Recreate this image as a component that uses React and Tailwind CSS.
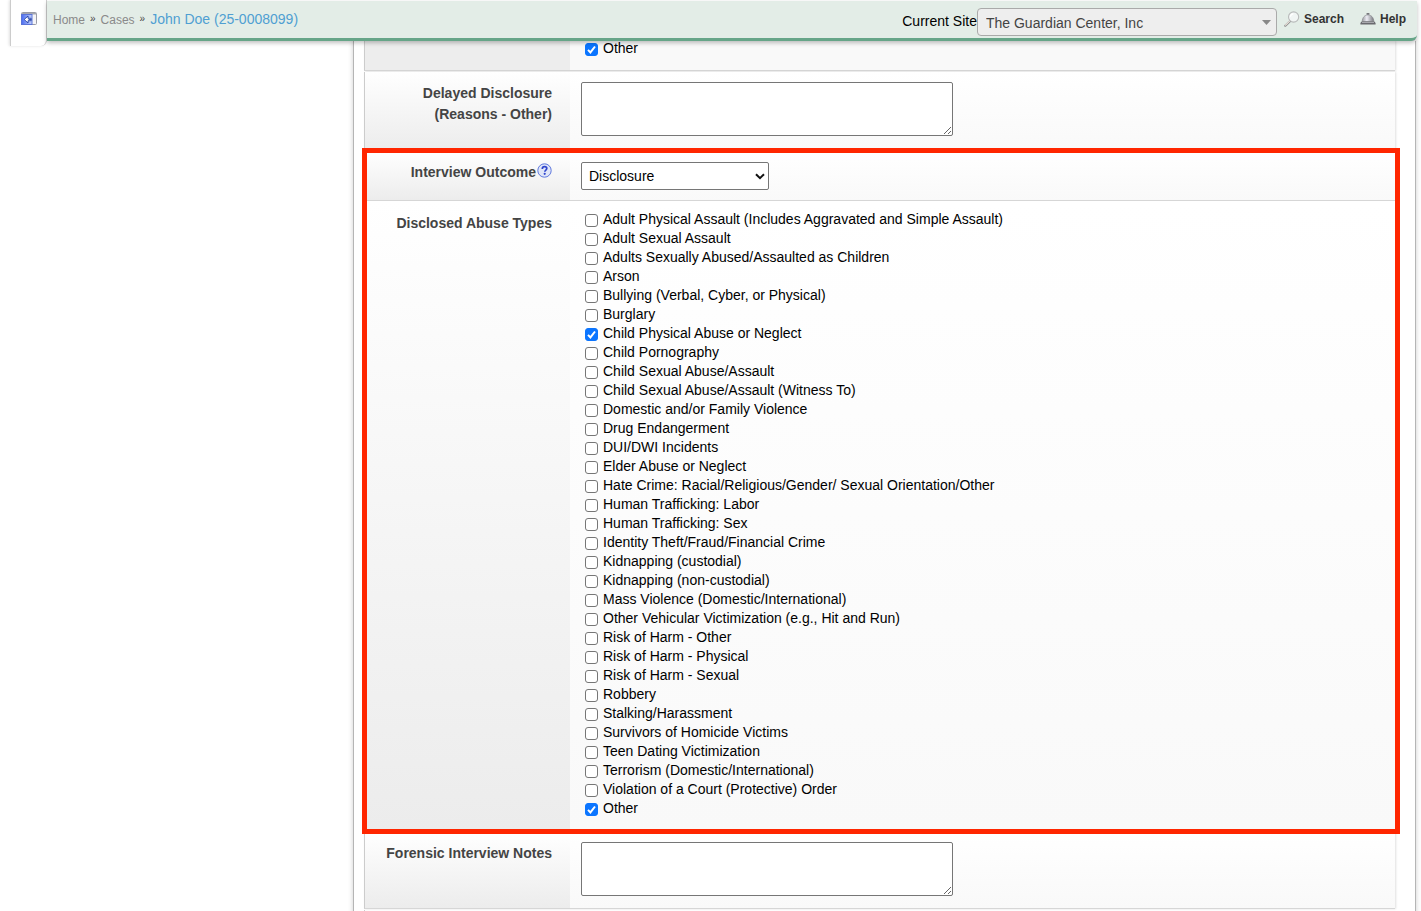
import React, { useState } from 'react';

const ABUSE_TYPES = [
  'Adult Physical Assault (Includes Aggravated and Simple Assault)',
  'Adult Sexual Assault',
  'Adults Sexually Abused/Assaulted as Children',
  'Arson',
  'Bullying (Verbal, Cyber, or Physical)',
  'Burglary',
  'Child Physical Abuse or Neglect',
  'Child Pornography',
  'Child Sexual Abuse/Assault',
  'Child Sexual Abuse/Assault (Witness To)',
  'Domestic and/or Family Violence',
  'Drug Endangerment',
  'DUI/DWI Incidents',
  'Elder Abuse or Neglect',
  'Hate Crime: Racial/Religious/Gender/ Sexual Orientation/Other',
  'Human Trafficking: Labor',
  'Human Trafficking: Sex',
  'Identity Theft/Fraud/Financial Crime',
  'Kidnapping (custodial)',
  'Kidnapping (non-custodial)',
  'Mass Violence (Domestic/International)',
  'Other Vehicular Victimization (e.g., Hit and Run)',
  'Risk of Harm - Other',
  'Risk of Harm - Physical',
  'Risk of Harm - Sexual',
  'Robbery',
  'Stalking/Harassment',
  'Survivors of Homicide Victims',
  'Teen Dating Victimization',
  'Terrorism (Domestic/International)',
  'Violation of a Court (Protective) Order',
  'Other',
];

function PanelIcon() {
  return (
    <svg width="16" height="14" viewBox="0 0 16 14">
      <defs>
        <linearGradient id="panelBlue" x1="0" x2="1">
          <stop offset="0" stopColor="#4a6cf0" />
          <stop offset="1" stopColor="#c3d0fa" />
        </linearGradient>
      </defs>
      <rect x="0.5" y="0.5" width="15" height="12" rx="1" fill="#f4f4f6" stroke="#9a9ca6" />
      <rect x="1" y="1" width="14" height="1.5" fill="#a5a7b0" />
      <rect x="0.5" y="2.5" width="10.5" height="10" fill="url(#panelBlue)" stroke="#5b74d8" />
      <path d="M3.2 7.5 7 4v2.3h3.2v2.4H7V11z" fill="#fff" stroke="#2443a8" strokeWidth="0.9" />
      <path d="M7.6 7.5h2.6" stroke="#2443a8" strokeWidth="0.9" />
    </svg>
  );
}

function SearchIcon() {
  return (
    <svg width="16" height="16" viewBox="0 0 16 16">
      <path d="M1.3 14.7 6 10.2" stroke="#8d8d8d" strokeWidth="2.2" strokeLinecap="round" />
      <path d="M1.5 14.1 5.6 10.1" stroke="#f0e8e0" strokeWidth="1.1" strokeLinecap="round" />
      <circle cx="9.6" cy="6" r="5.1" fill="#f1f5f4" stroke="#b9bbbb" strokeWidth="1.1" />
      <path d="M6.4 5.8a3.4 3.4 0 0 1 3-3" fill="none" stroke="#fff" strokeWidth="1.2" />
    </svg>
  );
}

function BellIcon() {
  return (
    <svg width="16" height="14" viewBox="0 0 16 14">
      <defs>
        <linearGradient id="bellMetal" x1="0" x2="1">
          <stop offset="0" stopColor="#9a9a9e" />
          <stop offset="0.4" stopColor="#ececf4" />
          <stop offset="1" stopColor="#77777d" />
        </linearGradient>
      </defs>
      <rect x="6.4" y="1" width="3.2" height="1.8" rx="0.8" fill="#77777c" />
      <path d="M2.2 9.6C2.2 5.6 4.7 2.9 8 2.9s5.8 2.7 5.8 6.7z" fill="url(#bellMetal)" stroke="#808086" strokeWidth="0.6" />
      <path d="M1.6 9.6h12.8l1.2 1.5v1.3H.4v-1.3z" fill="#6a6a6f" />
      <path d="M2 10.5h12" stroke="#b9b9be" strokeWidth="0.8" />
    </svg>
  );
}

function HelpIcon() {
  return (
    <svg width="15" height="15" viewBox="0 0 15 15">
      <circle cx="7.5" cy="7.5" r="6.7" fill="#e0e6f8" stroke="#5f78dc" strokeWidth="1" />
      <path
        d="M5.3 5.9c0-1.4.9-2.2 2.3-2.2s2.2.8 2.2 1.9c0 1.5-2 1.5-2 3.2"
        fill="none"
        stroke="#2f45cc"
        strokeWidth="1.7"
      />
      <circle cx="7.7" cy="10.8" r="1.1" fill="#2f45cc" />
    </svg>
  );
}

function Check({ label, checked, onChange }) {
  return (
    <label className="flex h-[19px] w-fit items-center text-sm text-black">
      <span className="relative mt-[3px] mr-[5px] ml-1 flex h-[13px] w-[13px] items-center justify-center">
        <input
          type="checkbox"
          checked={checked}
          onChange={onChange}
          className="peer h-[13px] w-[13px] appearance-none rounded-[3px] border border-[#767676] bg-white checked:border-[#0b75ff] checked:bg-[#0b75ff]"
        />
        <svg className="pointer-events-none absolute hidden peer-checked:block" width="13" height="13" viewBox="0 0 13 13">
          <path d="M3 6.9 5.4 9.4 10 3.5" fill="none" stroke="#fff" strokeWidth="2" />
        </svg>
      </span>
      {label}
    </label>
  );
}

function Row({ label, htmlFor, children, className = '' }) {
  return (
    <div className={`mb-px grid grid-cols-[205px_1fr] border-b border-l border-b-[#d6d6d6] border-l-[#cccccc] ${className}`}>
      <div className="bg-linear-to-b from-white to-[#ececec] pt-[11px] pr-[18px] text-right text-sm leading-[21px] font-bold text-[#444]">
        {htmlFor ? <label htmlFor={htmlFor}>{label}</label> : label}
      </div>
      <div className="bg-linear-to-b from-white to-[#f9f9f9] px-[11px] pt-[10px]">{children}</div>
    </div>
  );
}

export default function App() {
  const [selected, setSelected] = useState(['Child Physical Abuse or Neglect', 'Other']);
  const [reasonOther, setReasonOther] = useState(true);

  const toggle = (name) => {
    setSelected(selected.includes(name) ? selected.filter((s) => s !== name) : [...selected, name]);
  };

  return (
    <div className="flex h-screen flex-col overflow-hidden bg-white font-['Liberation_Sans',Arial,sans-serif]">
      <header className="relative z-10 flex h-[41px] shrink-0 items-start pr-1 pl-[10px]">
        <button
          type="button"
          aria-label="Toggle side panel"
          className="flex h-[46px] w-[37px] shrink-0 justify-center rounded-br-md border-r border-l border-[#cccccc] bg-white pt-3 shadow-[-1px_0_3px_rgba(0,0,0,0.12)]"
        >
          <PanelIcon />
        </button>
        <div className="mt-px flex h-10 flex-1 items-start justify-between rounded-br-md border-b-3 border-[#66a588] bg-[#e3ede7] shadow-[0_2px_4px_rgba(0,0,0,0.25)]">
          <nav className="flex h-9 items-center gap-[5px] pl-[6px] text-xs text-[#8a8a8a]">
            <a href="#home" className="pt-px">Home</a>
            <span className="text-[10px] text-[#444]">»</span>
            <a href="#cases" className="pt-px">Cases</a>
            <span className="text-[10px] text-[#444]">»</span>
            <a href="#case" className="text-sm text-[#4f9fd2]">John Doe (25-0008099)</a>
          </nav>
          <div className="flex items-start pr-[11px]">
            <label htmlFor="site" className="pt-[10px] text-sm text-black">Current Site</label>
            <div className="relative mt-[7px]">
              <select
                id="site"
                className="h-7 w-[300px] appearance-none rounded border border-[#aaa] bg-[#eee] pt-[2px] pl-2 text-sm text-[#444]"
              >
                <option>The Guardian Center, Inc</option>
              </select>
              <svg className="pointer-events-none absolute top-3 right-[6px]" width="9" height="5" viewBox="0 0 9 5">
                <path d="M0 0h9L4.5 5z" fill="#888" />
              </svg>
            </div>
            <a href="#search" className="ml-[7px] flex h-9 items-center gap-1 text-xs font-bold text-[#333]">
              <SearchIcon />
              Search
            </a>
            <a href="#help" className="ml-4 flex h-9 items-center gap-1 text-xs font-bold text-[#333]">
              <BellIcon />
              Help
            </a>
          </div>
        </div>
      </header>

      <main className="mr-[5px] ml-[353px] flex-1 border-r border-l border-[#b5b5b5] pr-5 pl-[10px] shadow-[0_0_5px_rgba(0,0,0,0.2)]">
        <div className="mb-px grid h-[30px] grid-cols-[205px_1fr] border-b border-l border-b-[#d6d6d6] border-l-[#cccccc] shadow-[1px_0_2px_rgba(0,0,0,0.12)]">
          <div className="bg-[#ededed]" />
          <div className="bg-[#f9f9f9] pl-[11px]">
            <div className="-mt-[3px]">
              <Check label="Other" checked={reasonOther} onChange={() => setReasonOther(!reasonOther)} />
            </div>
          </div>
        </div>

        <Row
          label={<>Delayed Disclosure<br />(Reasons - Other)</>}
          htmlFor="reasons"
          className="h-[79px] shadow-[1px_0_2px_rgba(0,0,0,0.12)]"
        >
          <textarea id="reasons" className="block h-[54px] w-[372px] rounded-xs border border-[#767676] bg-white p-1 text-sm" />
        </Row>

        <section className="relative">
          <Row
            label={<span className="flex items-start justify-end gap-px leading-[19px]">Interview Outcome<HelpIcon /></span>}
            htmlFor="outcome"
            className="h-[49px]"
          >
            <div className="relative w-[188px]">
              <select
                id="outcome"
                className="block h-7 w-full appearance-none rounded-xs border border-[#767676] bg-white pl-[7px] text-sm text-black"
              >
                <option>Disclosure</option>
                <option>No Disclosure</option>
              </select>
              <svg className="pointer-events-none absolute top-[11px] right-1" width="10" height="7" viewBox="0 0 10 7">
                <path d="M1 1.2 5 5.2 9 1.2" fill="none" stroke="#111" strokeWidth="2" />
              </svg>
            </div>
          </Row>
          <Row label="Disclosed Abuse Types">
            <div role="group" aria-label="Disclosed Abuse Types" className="-mt-[3px] pb-[13px]">
              {ABUSE_TYPES.map((name) => (
                <Check key={name} label={name} checked={selected.includes(name)} onChange={() => toggle(name)} />
              ))}
            </div>
          </Row>
          <div className="pointer-events-none absolute -top-1 -right-[5px] -bottom-[3px] -left-[2px] border-5 border-[#ff2600]" />
        </section>

        <Row label="Forensic Interview Notes" htmlFor="notes" className="h-[77px] shadow-[1px_0_2px_rgba(0,0,0,0.12)]">
          <textarea id="notes" className="block h-[54px] w-[372px] rounded-xs border border-[#767676] bg-white p-1 text-sm" />
        </Row>
        <div className="h-4 border-l border-[#cccccc]" />
      </main>
    </div>
  );
}
